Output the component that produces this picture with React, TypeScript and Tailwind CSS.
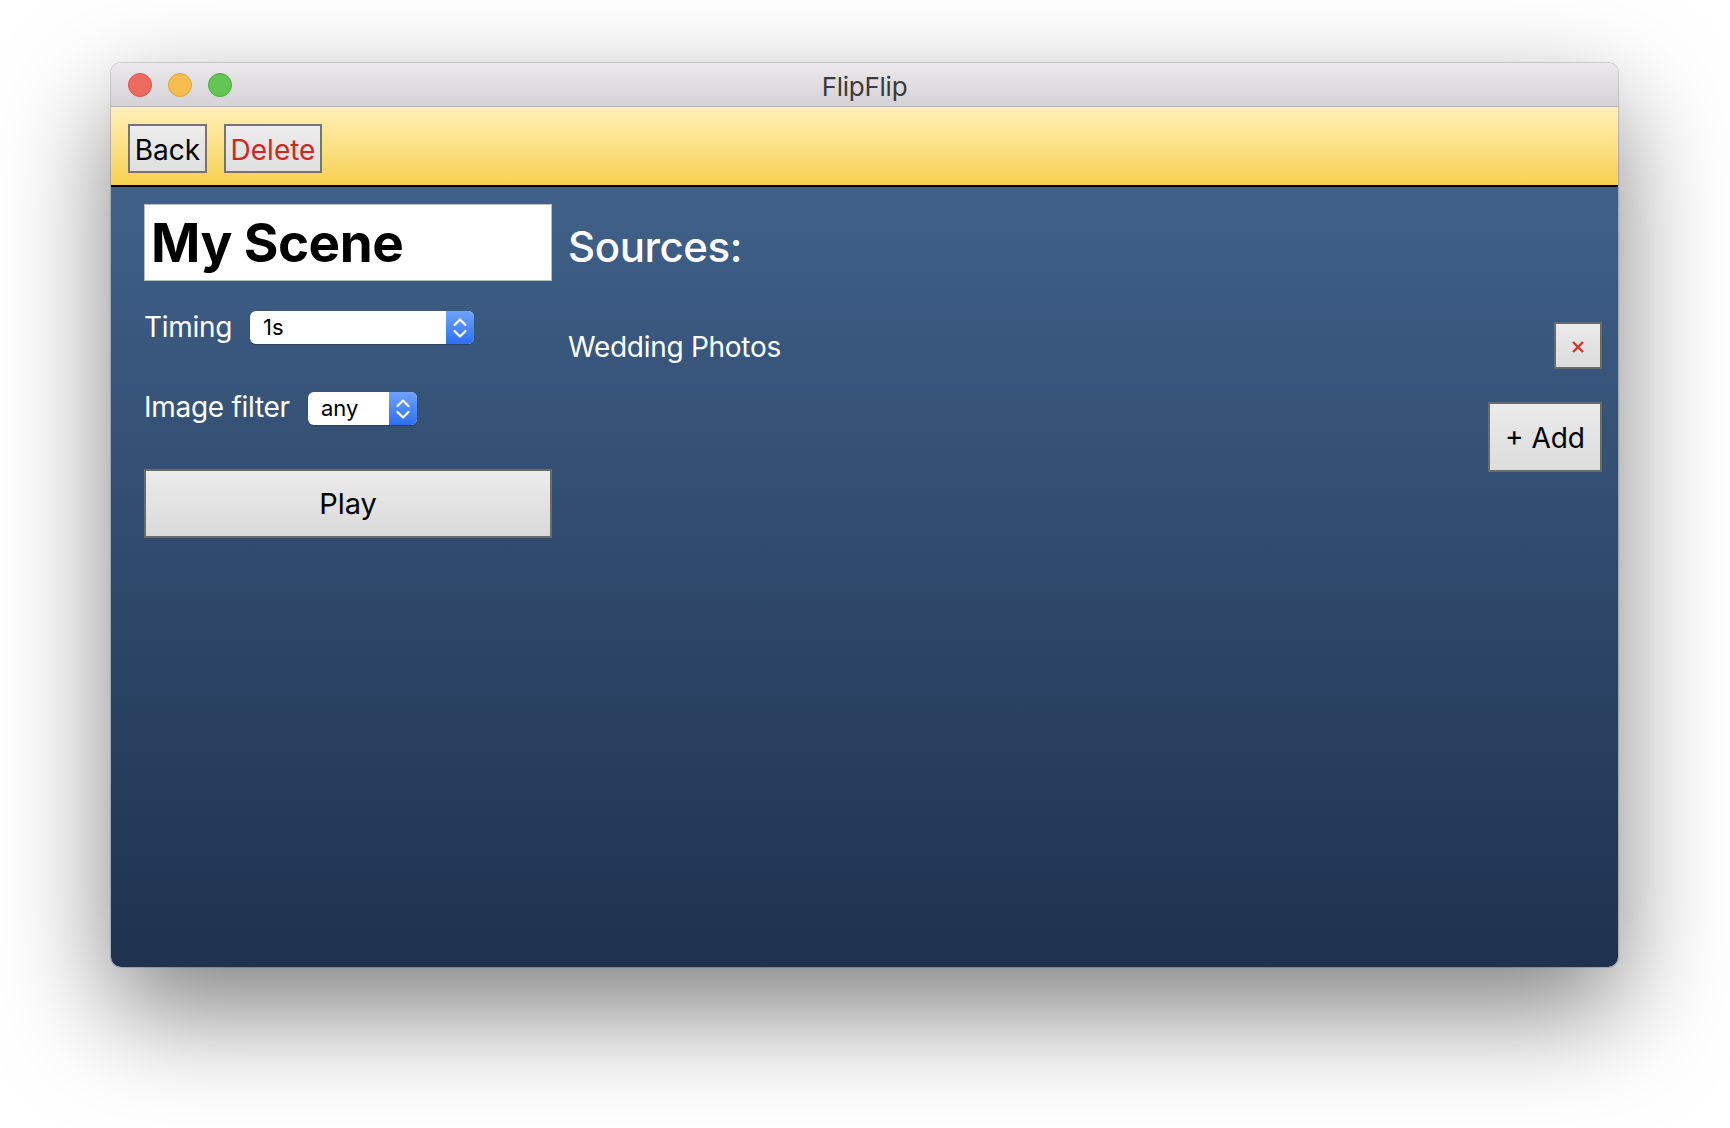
import React from "react";

function Chevrons() {
  return (
    <svg width="16" height="26" viewBox="0 0 16 26" fill="none">
      <path d="M2.5 10 L8 4.5 L13.5 10" stroke="white" strokeWidth="2.2" strokeLinecap="round" strokeLinejoin="round" />
      <path d="M2.5 16 L8 21.5 L13.5 16" stroke="white" strokeWidth="2.2" strokeLinecap="round" strokeLinejoin="round" />
    </svg>
  );
}

function Select({ value, width, pl }: { value: string; width: string; pl: string }) {
  return (
    <div className={`flex h-[33px] overflow-hidden rounded-[6px] bg-white shadow-[0_1px_1px_rgba(0,0,0,0.25)] ${width}`}>
      <div className={`flex flex-1 items-center text-[22px] text-black ${pl}`}>{value}</div>
      <div className="flex w-[28px] items-center justify-center bg-gradient-to-b from-[#6ea2fb] to-[#2c6ff2]">
        <Chevrons />
      </div>
    </div>
  );
}

export default function App() {
  return (
    <div className="h-[1128px] w-[1730px] bg-white pl-[111px] pt-[63px] font-[Inter,sans-serif]">
      <div className="flex h-[904px] w-[1507px] flex-col overflow-hidden rounded-[10px] shadow-[0_44px_110px_rgba(0,0,0,0.5),0_0_0_1px_rgba(0,0,0,0.15)]">
        {/* Title bar */}
        <div className="grid h-[44px] grid-cols-[1fr_auto_1fr] items-center border-b border-[#b3b3b3] bg-gradient-to-b from-[#ebe9eb] to-[#d4d2d4]">
          <div className="flex items-center gap-[16px] pl-[17px]">
            <div className="h-[24px] w-[24px] rounded-full border border-[#d9544a] bg-[#ee6a5f]" />
            <div className="h-[24px] w-[24px] rounded-full border border-[#dba43c] bg-[#f5be4f]" />
            <div className="h-[24px] w-[24px] rounded-full border border-[#4fa83f] bg-[#62c554]" />
          </div>
          <div className="pt-[3px] text-[26px] tracking-[-0.01em] text-[#3b3b3b]">FlipFlip</div>
          <div />
        </div>

        {/* Toolbar */}
        <div className="flex h-[80px] items-start gap-[17px] border-b-2 border-black bg-gradient-to-b from-[#fdefb5] to-[#f8d14c] pl-[17px] pt-[17px]">
          <button className="flex h-[49px] w-[79px] items-center justify-center border-2 border-[#747474] bg-gradient-to-b from-[#ececec] to-[#dfdfdf] pt-[2px] text-[28px] text-black">
            Back
          </button>
          <button className="flex h-[49px] w-[98px] items-center justify-center border-2 border-[#747474] bg-gradient-to-b from-[#ececec] to-[#dfdfdf] pt-[2px] text-[28px] text-[#d0281f]">
            Delete
          </button>
        </div>

        {/* Content */}
        <div className="flex flex-1 gap-[16px] bg-gradient-to-b from-[#406189] to-[#1f324f] pl-[33px] pr-[16px] pt-[17px]">
          {/* Left column */}
          <div className="flex w-[408px] flex-col">
            <div className="flex h-[77px] items-center border border-[#bdbdbd] bg-white pl-[6px] pt-[2px] text-[53px] font-bold leading-none tracking-[-0.01em] text-black">
              My Scene
            </div>
            <div className="mt-[30px] flex h-[33px] items-center">
              <div className="w-[106px] pb-[2px] text-[28px] tracking-[-0.01em] text-white">Timing</div>
              <Select value="1s" width="w-[224px]" pl="pl-[13px]" />
            </div>
            <div className="mt-[48px] flex h-[33px] items-center">
              <div className="w-[164px] pb-[3px] text-[28px] tracking-[-0.01em] text-white">Image filter</div>
              <Select value="any" width="w-[109px]" pl="pl-[13px]" />
            </div>
            <button className="mt-[44px] flex h-[69px] w-full items-center justify-center border-2 border-[#6b6b6b] bg-gradient-to-b from-[#ebebeb] to-[#dadada] text-[29px] text-black">
              Play
            </button>
          </div>

          {/* Right column */}
          <div className="flex flex-1 flex-col">
            <div className="flex h-[77px] items-center pt-[8px] text-[42px] font-medium tracking-[-0.01em] text-white">
              Sources:
            </div>
            <div className="mt-[41px] flex h-[47px] items-center justify-between">
              <div className="pt-[2px] text-[28px] tracking-[-0.01em] text-white">Wedding Photos</div>
              <button className="flex h-[47px] w-[48px] items-center justify-center border-2 border-[#6b6b6b] bg-gradient-to-b from-[#ebebeb] to-[#dcdcdc] pt-[3px]">
                <svg width="12" height="12" viewBox="0 0 12 12">
                  <path d="M1 1 L11 11 M11 1 L1 11" stroke="#d8322b" strokeWidth="2.4" />
                </svg>
              </button>
            </div>
            <button className="mt-[33px] flex h-[70px] w-[114px] items-center justify-center self-end border-2 border-[#6b6b6b] bg-gradient-to-b from-[#ebebeb] to-[#dcdcdc] pt-[2px] text-[28px] text-black">
              + Add
            </button>
          </div>
        </div>
      </div>
    </div>
  );
}
